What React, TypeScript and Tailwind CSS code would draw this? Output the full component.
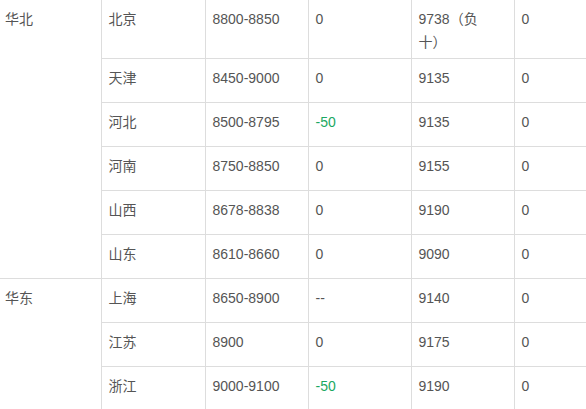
import React from 'react';

type Row = {
  region?: string;
  span?: number;
  city: string;
  range: string;
  change: string;
  price: React.ReactNode;
  diff: string;
  tall?: boolean;
};

const rows: Row[] = [
  { region: '华北', span: 6, city: '北京', range: '8800-8850', change: '0', price: <>9738（负<br />十）</>, diff: '0', tall: true },
  { city: '天津', range: '8450-9000', change: '0', price: '9135', diff: '0' },
  { city: '河北', range: '8500-8795', change: '-50', price: '9135', diff: '0' },
  { city: '河南', range: '8750-8850', change: '0', price: '9155', diff: '0' },
  { city: '山西', range: '8678-8838', change: '0', price: '9190', diff: '0' },
  { city: '山东', range: '8610-8660', change: '0', price: '9090', diff: '0' },
  { region: '华东', span: 3, city: '上海', range: '8650-8900', change: '--', price: '9140', diff: '0' },
  { city: '江苏', range: '8900', change: '0', price: '9175', diff: '0' },
  { city: '浙江', range: '9000-9100', change: '-50', price: '9190', diff: '0' },
];

const cell = 'align-top pt-2 pl-[7px] border-r border-[#dddddd] leading-[23px]';

export default function App() {
  return (
    <div
      className="w-[586px] h-[409px] overflow-hidden bg-white text-[14px] text-[#555555]"
      style={{ fontFamily: '"Liberation Sans", "Noto Sans CJK SC", sans-serif' }}
    >
      <table className="border-collapse table-fixed w-[617px]">
        <colgroup>
          <col className="w-[101px]" />
          <col className="w-[104px]" />
          <col className="w-[103px]" />
          <col className="w-[103px]" />
          <col className="w-[103px]" />
          <col className="w-[103px]" />
        </colgroup>
        <tbody>
          {rows.map((r) => (
            <tr key={r.city} className={`${r.tall ? 'h-[58px]' : 'h-[44px]'} border-b border-[#dddddd]`}>
              {r.region && (
                <td rowSpan={r.span} className="align-top pt-2 pl-[5px] border-r border-[#dddddd] leading-[23px]">
                  {r.region}
                </td>
              )}
              <td className={cell}>{r.city}</td>
              <td className={cell}>{r.range}</td>
              <td className={`${cell} ${r.change === '-50' ? 'text-[#1ba862]' : ''}`}>{r.change}</td>
              <td className={cell}>{r.price}</td>
              <td className={cell}>{r.diff}</td>
            </tr>
          ))}
        </tbody>
      </table>
    </div>
  );
}
